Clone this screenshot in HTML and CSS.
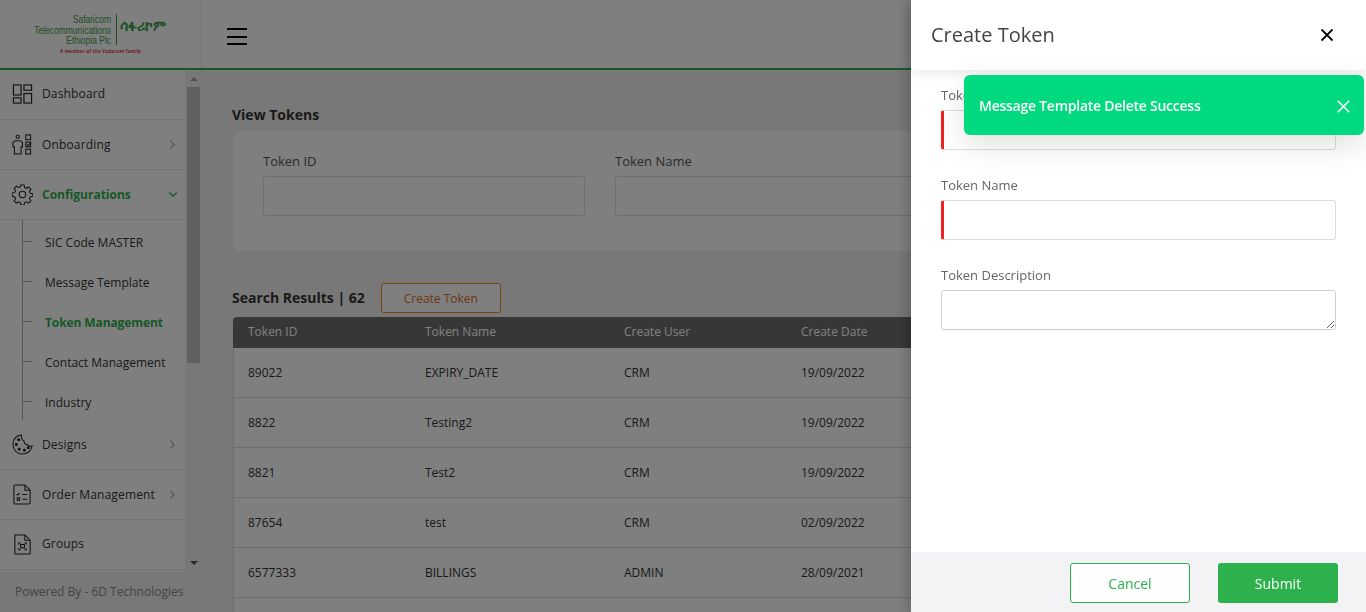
FILE: index.html
```html
<!DOCTYPE html>
<html lang="en">
<head>
  <meta charset="UTF-8" />
  <title>Token Management</title>
  <meta name="viewport" content="width=device-width, initial-scale=1.0" />
  <link rel="stylesheet" href="styles.css">
</head>
<body>
  <div class="app">
    <header class="topbar">
      <div class="brand">
        <div class="logo-row">
          <div class="logo-en"><div class="logo-narrow">Safaricom<br>Telecommunications<br>Ethiopia Plc</div></div>
          <div class="logo-am">ሳፋሪኮም</div>
        </div>
        <div class="logo-tag">A member of the Vodacom family</div>
      </div>
      <div class="burger"><span></span><span></span><span></span></div>
    </header>

    <div class="layout">
      <aside class="sidebar">
        <div class="side-scroll">
          <nav class="menu">
            <div class="item up">
              <svg class="ico" viewBox="0 0 22 22" fill="none" stroke="#222" stroke-width="1.2"><rect x="1.5" y="1" width="8" height="10.500"/><rect x="12.500" y="1" width="8" height="5.500"/><rect x="1.5" y="14.500" width="8" height="5.500"/><rect x="12.500" y="10" width="8" height="10"/></svg>
              <span>Dashboard</span>
            </div>
            <div class="item">
              <svg class="ico" viewBox="0 0 22 22" fill="none" stroke="#222" stroke-width="1.1"><circle cx="6" cy="2.800" r="1.700"/><path d="M3.500 7h5l2.500 2v4.500H9.500v7.500h-7v-7.500H1V9z"/><rect x="14.500" y="1" width="5" height="5"/><rect x="14.500" y="8.500" width="5" height="5"/><rect x="14.500" y="16" width="5" height="5"/><path d="M15.500 11l1.200 1.200 3.300-3.200"/></svg>
              <span>Onboarding</span>
              <svg class="chev" viewBox="0 0 8 12" fill="none" stroke="#aaa" stroke-width="1.400"><path d="M1.500 1.500 6 6l-4.500 4.500"/></svg>
            </div>
            <div class="item active">
              <svg class="ico" viewBox="0 0 22 22" fill="none" stroke="#222" stroke-width="1.100"><circle cx="11" cy="11" r="3.400"/><path d="M9.300 1h3.400l.5 2.700 1.900.8 2.300-1.500 2.400 2.400-1.500 2.300.8 1.900 2.700.5v2.800l-2.700.6-.8 1.900 1.500 2.300-2.400 2.400-2.300-1.500-1.900.8-.5 2.600H9.300l-.5-2.600-1.900-.8-2.300 1.500-2.400-2.400 1.500-2.300-.8-1.900-2.700-.6V9.300l2.700-.5.8-1.900-1.500-2.300 2.400-2.400 2.300 1.500 1.900-.8z"/></svg>
              <span>Configurations</span>
              <svg class="chev-down" viewBox="0 0 12 8" fill="none" stroke="#2db14d" stroke-width="1.600"><path d="M1.500 1.500 6 6l4.500-4.500"/></svg>
            </div>
            <div class="submenu">
              <div class="sub">SIC Code MASTER</div>
              <div class="sub">Message Template</div>
              <div class="sub current">Token Management</div>
              <div class="sub">Contact Management</div>
              <div class="sub">Industry</div>
            </div>
            <div class="item">
              <svg class="ico" viewBox="0 0 22 22" fill="none" stroke="#222" stroke-width="1.100"><path d="M10 1C4.800 1 1 5.300 1 10.800 1 16.600 5.300 21 10.800 21c5.200 0 9.800-3.600 10.200-8.500-1.800.8-4.200.2-5-1.600-2.200.3-3.700-1.500-3.300-3.500C10.600 6.500 9.600 3.500 10 1z"/><circle cx="7" cy="6" r="1" fill="#222"/><circle cx="4.500" cy="11" r="1" fill="#222"/><circle cx="7.500" cy="16" r="1" fill="#222"/><circle cx="13" cy="17" r="1" fill="#222"/><circle cx="17" cy="14.500" r="1" fill="#222"/></svg>
              <span>Designs</span>
              <svg class="chev" viewBox="0 0 8 12" fill="none" stroke="#aaa" stroke-width="1.400"><path d="M1.500 1.500 6 6l-4.500 4.500"/></svg>
            </div>
            <div class="item">
              <svg class="ico" viewBox="0 0 22 22" fill="none" stroke="#222" stroke-width="1.100"><path d="M3 1h10.500L19 6.500V19.500a1.500 1.500 0 0 1-1.500 1.500H3a1.500 1.500 0 0 1-1-1.500V2.500A1.500 1.500 0 0 1 3 1z"/><path d="M13.500 1v5.500H19"/><path d="M5 10.500l1 1 2-2M11 11h5M11 16h5"/><rect x="5.500" y="14.500" width="2.500" height="2.500"/></svg>
              <span>Order Management</span>
              <svg class="chev" viewBox="0 0 8 12" fill="none" stroke="#aaa" stroke-width="1.400"><path d="M1.500 1.500 6 6l-4.500 4.500"/></svg>
            </div>
            <div class="item up">
              <svg class="ico" viewBox="0 0 22 22" fill="none" stroke="#222" stroke-width="1.100"><path d="M3 1h10.500L19 6.500V21H3z"/><path d="M13.500 1v5.500H19"/><path d="M7 11V9.500h2M13 9.500h2V11M15 15v1.500h-2M9 16.500H7V15"/><rect x="9" y="11" width="4" height="3.500"/></svg>
              <span>Groups</span>
            </div>
          </nav>
          <div class="scrollbar">
            <i class="arrow-up"></i>
            <b class="thumb"></b>
            <i class="arrow-down"></i>
          </div>
        </div>
        <div class="powered">Powered By - 6D Technologies</div>
      </aside>

      <main class="content">
        <h2 class="title">View Tokens</h2>
        <div class="filter-card">
          <div class="field"><label>Token ID</label><div class="box"></div></div>
          <div class="field"><label>Token Name</label><div class="box"></div></div>
          <div class="field"><label>Token Type</label><div class="box"></div></div>
        </div>
        <div class="results-head">
          <h2 class="title">Search Results | 62</h2>
          <button class="btn-create">Create Token</button>
        </div>
        <table class="grid">
          <thead>
            <tr><th class="c1">Token ID</th><th class="c2">Token Name</th><th class="c3">Create User</th><th class="c4">Create Date</th><th></th></tr>
          </thead>
          <tbody>
            <tr><td>89022</td><td>EXPIRY_DATE</td><td>CRM</td><td>19/09/2022</td><td></td></tr>
            <tr><td>8822</td><td>Testing2</td><td>CRM</td><td>19/09/2022</td><td></td></tr>
            <tr><td>8821</td><td>Test2</td><td>CRM</td><td>19/09/2022</td><td></td></tr>
            <tr><td>87654</td><td>test</td><td>CRM</td><td>02/09/2022</td><td></td></tr>
            <tr><td>6577333</td><td>BILLINGS</td><td>ADMIN</td><td>28/09/2021</td><td></td></tr>
            <tr><td></td><td></td><td></td><td></td><td></td></tr>
          </tbody>
        </table>
      </main>
    </div>
  </div>

  <div class="overlay"></div>

  <section class="drawer">
    <div class="drawer-head">
      <h3>Create Token</h3>
      <svg class="drawer-close" viewBox="0 0 14 14" fill="none" stroke="#000" stroke-width="1.800"><path d="M1.500 1.500l11 11M12.500 1.500l-11 11"/></svg>
    </div>
    <div class="drawer-body">
      <div class="form-row"><label>Token ID</label><input class="req" type="text"></div>
      <div class="form-row"><label>Token Name</label><input class="req" type="text"></div>
      <div class="form-row"><label>Token Description</label><textarea></textarea></div>
    </div>
    <div class="drawer-foot">
      <button class="btn-cancel">Cancel</button>
      <button class="btn-submit">Submit</button>
    </div>
  </section>

  <div class="toast">
    <span>Message Template Delete Success</span>
    <svg viewBox="0 0 12 12" fill="none" stroke="#fff" stroke-width="1.500"><path d="M.700.700l10.600 10.600M11.300.700L.700 11.300"/></svg>
  </div>
</body>
</html>
```

FILE: styles.css
```css
* {
  box-sizing: border-box;
}
html, body {
  height: 100%;
}
body {
  font-family: 'Open Sans', sans-serif;
  margin: 0;
  height: 612px;
  overflow: hidden;
  background: #f1f1f1;
  color: #333;
}
.app {
  height: 612px;
  display: flex;
  flex-direction: column;
  overflow: hidden;
}
.topbar {
  height: 70px;
  flex: none;
  display: flex;
  align-items: center;
  background: #fff;
  border-bottom: 2px solid #2db14d;
}
.brand {
  width: 202px;
  height: 68px;
  border-right: 1px solid #e2e6e2;
  padding-top: 14px;
}
.logo-row {
  display: flex;
  align-items: flex-start;
  height: 31px;
}
.logo-en {
  width: 117px;
  height: 31px;
  color: #3a9c4a;
  border-right: 1px solid #3a9c4a;
  padding-right: 5px;
  white-space: nowrap;
}
.logo-narrow {
  font-family: 'Liberation Sans', sans-serif;
  font-size: 11px;
  line-height: 10.500px;
  text-align: right;
  transform: scaleX(0.77);
  transform-origin: right;
}
.logo-am {
  font-family: 'Noto Sans', 'DejaVu Sans', sans-serif;
  font-size: 14px;
  line-height: 24px;
  font-weight: 700;
  color: #3a9c4a;
  padding-left: 3px;
}
.logo-tag {
  font-size: 4.500px;
  line-height: 8px;
  font-weight: 700;
  color: #d83a3a;
  margin: 2px 0 0 60px;
  letter-spacing: 0.200px;
  white-space: nowrap;
}
.burger {
  margin: 5px 0 0 25px;
  display: flex;
  flex-direction: column;
  gap: 5.500px;
}
.burger span {
  width: 20px;
  height: 2px;
  background: #000;
}
.layout {
  flex: 1;
  display: flex;
  min-height: 0;
}
.sidebar {
  width: 202px;
  flex: none;
  display: flex;
  flex-direction: column;
  background: #f3f3f3;
}
.side-scroll {
  height: 502px;
  display: flex;
}
.menu {
  width: 185px;
  background: #fff;
}
.item {
  height: 50px;
  display: flex;
  align-items: center;
  padding-left: 12px;
  border-bottom: 1px solid #e6e6e6;
  font-size: 12px;
  letter-spacing: 0.150px;
  color: #333;
  position: relative;
}
.item span {
  margin-left: 9px;
}
.item.up span {
  margin-bottom: 2px;
}
.ico {
  width: 21px;
  height: 21px;
  flex: none;
}
.chev {
  width: 7px;
  height: 11px;
  position: absolute;
  right: 9px;
  top: 19px;
}
.chev-down {
  width: 10px;
  height: 7px;
  position: absolute;
  right: 7px;
  top: 21px;
}
.item.active {
  color: #2db14d;
  font-weight: 700;
  letter-spacing: 0;
}
.submenu {
  height: 200px;
  border-left: 1px solid #aaa;
  margin-left: 22px;
  padding-top: 2px;
}
.sub {
  height: 40px;
  display: flex;
  align-items: center;
  padding-left: 22px;
  font-size: 12px;
  position: relative;
  color: #333;
}
.sub::before {
  content: "";
  position: absolute;
  left: 0;
  top: 19px;
  width: 9px;
  height: 1px;
  background: #aaa;
}
.sub.current {
  color: #2db14d;
  font-weight: 700;
  letter-spacing: -0.100px;
}
.scrollbar {
  width: 17px;
  background: #f1f1f1;
  padding-top: 17px;
  position: relative;
}
.thumb {
  display: block;
  width: 13px;
  height: 276px;
  margin-left: 2px;
  background: #c1c1c1;
}
.arrow-up, .arrow-down {
  position: absolute;
  left: 5px;
  width: 0;
  height: 0;
  border-left: 4px solid transparent;
  border-right: 4px solid transparent;
}
.arrow-up {
  top: 7px;
  border-bottom: 4px solid #a3a3a3;
}
.arrow-down {
  bottom: 7px;
  border-top: 4px solid #505050;
}
.powered {
  height: 40px;
  background: #eef0f2;
  font-size: 12px;
  color: #888;
  padding: 11px 0 0 15px;
  white-space: nowrap;
}
.content {
  flex: 1;
  padding: 35px 0 0 30px;
  min-width: 0;
  overflow: hidden;
}
.title {
  margin: 0;
  font-size: 14px;
  font-weight: 700;
  line-height: 20px;
  color: #333;
}
.filter-card {
  margin: 6px 14px 0 1px;
  height: 120px;
  background: #fff;
  border-radius: 8px;
  padding: 20px 30px;
  display: grid;
  grid-template-columns: 322px 322px 322px;
  gap: 30px;
}
.field label {
  display: block;
  font-size: 13px;
  line-height: 20px;
  color: #555;
  margin-bottom: 5px;
}
.box {
  height: 40px;
  border: 1px solid #ddd;
  border-radius: 3px;
  background: #fff;
}
.results-head {
  margin-top: 32px;
  display: flex;
  align-items: center;
  gap: 16px;
  height: 30px;
}
.btn-create {
  width: 120px;
  height: 30px;
  font: 12px 'Open Sans', sans-serif;
  color: #d9701e;
  background: #fff;
  border: 1px solid #f08a1d;
  border-radius: 3px;
}
.grid {
  width: 1119px;
  margin: 4px 0 0 1px;
  border-collapse: separate;
  border-spacing: 0;
  table-layout: fixed;
  font-size: 12px;
}
.grid th {
  height: 31px;
  background: #6f6f6f;
  color: #fff;
  font-weight: 400;
  text-align: left;
  padding: 0 0 2px 15px;
}
.grid th:first-child {
  border-top-left-radius: 4px;
}
.grid .c1 { width: 177px; }
.grid .c2 { width: 199px; }
.grid .c3 { width: 177px; }
.grid .c4 { width: 200px; }
.grid td {
  height: 50px;
  background: #fff;
  color: #333;
  padding: 0 0 0 15px;
  border-bottom: 1px solid #ddd;
}
.grid td:first-child {
  border-left: 1px solid #ddd;
  padding-left: 14px;
}
.overlay {
  position: fixed;
  inset: 0;
  background: rgba(0, 0, 0, 0.5);
}
.drawer {
  position: fixed;
  top: 0;
  right: 0;
  bottom: 0;
  width: 455px;
  background: #fff;
  display: flex;
  flex-direction: column;
  box-shadow: -4px 0 12px rgba(0, 0, 0, 0.2);
}
.drawer-head {
  height: 70px;
  flex: none;
  display: flex;
  align-items: center;
  justify-content: space-between;
  padding: 0 32px 0 20px;
  box-shadow: 0 2px 12px rgba(0, 0, 0, 0.1);
  position: relative;
}
.drawer-head h3 {
  margin: 0 0 2px;
  font-size: 20px;
  font-weight: 400;
  color: #444;
}
.drawer-close {
  width: 14px;
  height: 14px;
}
.drawer-body {
  flex: 1;
  padding: 15px 30px 0;
}
.form-row {
  margin-bottom: 25px;
}
.form-row label {
  display: block;
  font-size: 13px;
  line-height: 20px;
  color: #666;
  margin-bottom: 5px;
}
.form-row input, .form-row textarea {
  display: block;
  width: 395px;
  height: 40px;
  border: 1px solid #dcdcdc;
  border-radius: 3px;
  background: #fff;
  margin: 0;
  outline: none;
}
.form-row input.req {
  border-left: 3px solid #ee2222;
}
.form-row textarea {
  border-color: #cfcfd4;
}
.drawer-foot {
  height: 60px;
  flex: none;
  background: #f3f3f5;
  display: flex;
  justify-content: flex-end;
  align-items: center;
  gap: 28px;
  padding: 2px 28px 0 0;
}
.drawer-foot button {
  width: 120px;
  height: 40px;
  border-radius: 3px;
  font: 14px 'Open Sans', sans-serif;
}
.btn-cancel {
  background: #fff;
  color: #2db14d;
  border: 1px solid #2db14d;
}
.btn-submit {
  background: #2db14d;
  color: #fff;
  border: none;
}
.toast {
  position: fixed;
  left: 964px;
  top: 75px;
  width: 400px;
  height: 60px;
  background: #00d97e;
  border-radius: 6px;
  color: #fff;
  font-size: 14px;
  font-weight: 600;
  letter-spacing: -0.250px;
  display: flex;
  align-items: center;
  justify-content: space-between;
  padding: 0 14px 0 15px;
  box-shadow: 0 10px 30px rgba(0, 0, 0, 0.12);
}
.toast svg {
  width: 13px;
  height: 13px;
  margin-top: 2px;
}
```
